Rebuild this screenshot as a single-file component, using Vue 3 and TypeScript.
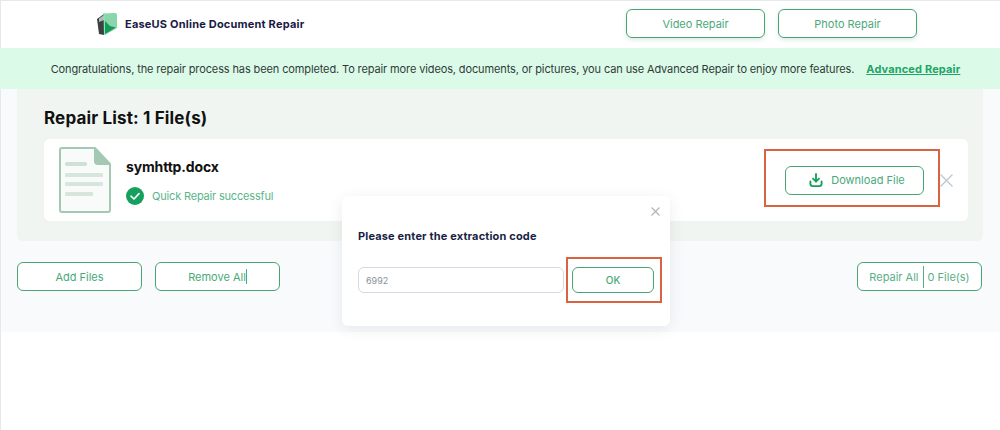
<script setup lang="ts">
const title: string = 'EaseUS Online Document Repair'
const navItems: string[] = ['Video Repair', 'Photo Repair']
</script>

<template>
  <div class="page">
    <header class="header">
      <div class="brand">
        <svg class="logo" width="22" height="24" viewBox="0 0 22 24">
          <path d="M1 7 L8 2 L8 23 L3 22 Z" fill="#3d3f40" />
          <path d="M3 6.5 L8 3 L8 8 L3 10 Z" fill="#b4b8b8" />
          <path d="M8 1.5 L19 1 Q21 1 21 3 L21 16 L9 23 Q8 23 8 21 Z" fill="#8ad6ac" />
          <path d="M9 9 L9 22 L20 15.5 L14 14 Z" fill="#17995a" />
          <path d="M8 0.5 L8.5 23" stroke="#7bf0b4" stroke-width="1" />
        </svg>
        <span class="brand-name">{{ title }}</span>
      </div>
      <nav class="nav">
        <button v-for="item in navItems" :key="item" class="btn nav-btn">{{ item }}</button>
      </nav>
    </header>

    <div class="banner">
      <span>Congratulations, the repair process has been completed. To repair more videos, documents, or pictures, you can use Advanced Repair to enjoy more features.</span>
      <a class="banner-link">Advanced Repair</a>
    </div>

    <main class="main">
      <section class="panel">
        <h2 class="panel-title">Repair List: 1 File(s)</h2>
        <div class="card">
          <svg class="doc" width="52" height="66" viewBox="0 0 52 66">
            <path d="M3 1 H36 L51 17 V63 Q51 65 49 65 H3 Q1 65 1 63 V3 Q1 1 3 1 Z" fill="#f9fbfa" stroke="#a3c9b3" stroke-width="2" />
            <path d="M35 0 L52 18 H39 Q35 18 35 14 Z" fill="#a3c9b3" />
            <rect x="6" y="15" width="22" height="4" rx="1.5" fill="#cfe2d7" />
            <rect x="6" y="26" width="38" height="4" rx="1" fill="#d6e6dc" />
            <rect x="6" y="35" width="38" height="4" rx="1" fill="#d6e6dc" />
            <rect x="6" y="45" width="28" height="4" rx="1" fill="#d6e6dc" />
          </svg>
          <div class="file-info">
            <div class="file-name">symhttp.docx</div>
            <div class="status">
              <svg width="18" height="18" viewBox="0 0 18 18">
                <circle cx="9" cy="9" r="9" fill="#16a05d" />
                <path d="M5 9.2 L8 12 L13 6.6" fill="none" stroke="#fff" stroke-width="1.6" stroke-linecap="round" stroke-linejoin="round" />
              </svg>
              <span>Quick Repair successful</span>
            </div>
          </div>
          <button class="btn download">
            <svg width="14" height="14" viewBox="0 0 15 15" fill="none" stroke="#16a05d" stroke-width="2" stroke-linecap="round" stroke-linejoin="round">
              <path d="M7.5 1 V9" />
              <path d="M4.3 6 L7.5 9.2 L10.7 6" />
              <path d="M1.5 9 V11.5 Q1.5 14 4 14 H11 Q13.5 14 13.5 11.5 V9" />
            </svg>
            <span>Download File</span>
          </button>
          <svg class="remove" width="13" height="13" viewBox="0 0 13 13">
            <path d="M0.5 0.5 L12.5 12.5 M12.5 0.5 L0.5 12.5" stroke="#bcc5cd" stroke-width="1.2" />
          </svg>
        </div>
      </section>

      <div class="actions">
        <button class="btn action">Add Files</button>
        <button class="btn action">Remove All<i class="caret"></i></button>
        <button class="btn repair-all"><span>Repair All</span><i class="divider"></i><span>0 File(s)</span></button>
      </div>
    </main>

    <div class="modal">
      <svg class="modal-close" width="9" height="9" viewBox="0 0 9 9">
        <path d="M0.5 0.5 L8.5 8.5 M8.5 0.5 L0.5 8.5" stroke="#aab4bc" stroke-width="1.1" />
      </svg>
      <div class="modal-title">Please enter the extraction code</div>
      <div class="modal-row">
        <input class="code" value="6992" />
        <button class="btn ok">OK</button>
      </div>
    </div>

    <div class="mark mark-download"></div>
    <div class="mark mark-ok"></div>
  </div>
</template>

<style>
html, body { margin: 0; background: #fff; }
</style>

<style scoped>
.page {
  position: relative;
  width: 1000px;
  height: 430px;
  overflow: hidden;
  background: #fff;
  font-family: Inter, Lato, sans-serif;
  box-shadow: inset 1px 1px 0 #e6e8ec;
}
.header {
  height: 48px;
  display: flex;
  align-items: center;
  padding: 0 83px 0 96px;
  box-sizing: border-box;
  justify-content: space-between;
}
.brand { display: flex; align-items: center; gap: 7px; margin-top: -1px; }
.logo { display: block; }
.brand-name { font-size: 11px; font-weight: 700; color: #1a1a46; letter-spacing: 0.2px; }
.nav { display: flex; gap: 13px; margin-top: -1px; }
.btn {
  box-sizing: border-box;
  border: 1px solid #4aa374;
  border-radius: 6px;
  background: #fff;
  color: #4aa97a;
  font-family: inherit;
  font-size: 11px;
  padding: 0;
  display: flex;
  align-items: center;
  justify-content: center;
}
.nav-btn { width: 139px; height: 29px; box-shadow: 0 2px 4px rgba(60, 150, 100, 0.18); }
.banner {
  height: 41px;
  background: #dcfae8;
  display: flex;
  align-items: center;
  justify-content: center;
  gap: 12px;
  font-size: 11px;
  letter-spacing: -0.12px;
  color: #2f3a3a;
  padding-left: 11px;
  box-sizing: border-box;
  white-space: nowrap;
}
.banner-link { font-weight: 700; color: #20a566; text-decoration: underline; letter-spacing: 0.15px; }
.main {
  height: 243px;
  background: #f9fafc;
  padding: 0 17px;
  margin-left: 1px;
  box-sizing: border-box;
}
.panel {
  margin-left: -1px;
  height: 152px;
  background: #f0f5f1;
  border-radius: 0 0 6px 6px;
  padding: 17px 15px 0 27px;
  box-sizing: border-box;
}
.panel-title { margin: 0 0 9px; font-size: 17px; line-height: 24px; font-weight: 700; color: #111; letter-spacing: 0.15px; }
.card {
  height: 82px;
  background: #fff;
  border-radius: 6px;
  display: flex;
  align-items: center;
  padding: 0 15px;
  box-sizing: border-box;
}
.doc { flex: none; }
.file-info { margin-left: 15px; flex: 1; padding-top: 3px; }
.file-name { font-size: 14px; font-weight: 700; color: #111; margin-bottom: 12px; letter-spacing: -0.15px; }
.status { display: flex; align-items: center; gap: 8px; font-size: 11px; color: #5ab58a; letter-spacing: -0.18px; }
.download { width: 139px; height: 29px; gap: 8px; margin-right: 16px; padding-left: 5px; }
.remove { flex: none; margin-right: 0; }
.actions { display: flex; margin-top: 21px; margin-left: -1px; margin-right: 1px; gap: 13px; }
.action { width: 125px; height: 29px; }
.repair-all { width: 125px; height: 29px; margin-left: auto; color: #5aae86; }
.caret { display: inline-block; width: 1px; height: 15px; background: #3fae80; margin-left: 0; }
.divider { display: inline-block; width: 1px; height: 22px; background: #5aae86; margin: 0 4px; }
.modal {
  position: absolute;
  left: 342px;
  top: 196px;
  width: 328px;
  height: 130px;
  background: #fff;
  border-radius: 6px;
  box-shadow: 0 3px 14px rgba(60, 70, 90, 0.1);
  box-sizing: border-box;
  padding: 33px 16px 0;
}
.modal-close { position: absolute; top: 11px; right: 10px; }
.modal-title { font-size: 11px; line-height: 14px; font-weight: 700; color: #1a1f47; letter-spacing: 0.16px; }
.modal-row { display: flex; gap: 8px; margin-top: 24px; }
.code {
  width: 206px;
  height: 26px;
  box-sizing: border-box;
  border: 1px solid #d3dae3;
  border-radius: 6px;
  padding: 0 7px;
  font-family: inherit;
  font-size: 9px;
  color: #8a8f99;
  outline: none;
  background: #fff;
}
.ok { width: 82px; height: 26px; font-size: 10px; font-weight: 500; }
.mark { position: absolute; box-sizing: border-box; border: 2px solid #d9633f; }
.mark-download { left: 764px; top: 149px; width: 176px; height: 58px; }
.mark-ok { left: 566px; top: 257px; width: 96px; height: 46px; }
</style>
